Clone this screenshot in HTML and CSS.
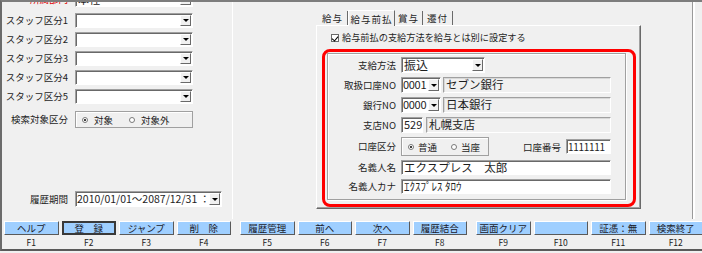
FILE: index.html
```html
<!DOCTYPE html>
<html>
  <head>
    <title>スタッフ登録</title>
    <link rel="stylesheet" href="styles.css">
  </head>
  <body>
    <div class="frame">
      <div class="main">
        <div class="left">
          <div class="row first">
            <span class="lbl red">所属部門</span>
            <div class="combo"><span class="val">本社</span><span class="arrow"></span></div>
          </div>
          <div class="row">
            <span class="lbl">スタッフ区分1</span>
            <div class="combo"><span class="val"></span><span class="arrow"></span></div>
          </div>
          <div class="row">
            <span class="lbl">スタッフ区分2</span>
            <div class="combo"><span class="val"></span><span class="arrow"></span></div>
          </div>
          <div class="row">
            <span class="lbl">スタッフ区分3</span>
            <div class="combo"><span class="val"></span><span class="arrow"></span></div>
          </div>
          <div class="row">
            <span class="lbl">スタッフ区分4</span>
            <div class="combo"><span class="val"></span><span class="arrow"></span></div>
          </div>
          <div class="row">
            <span class="lbl">スタッフ区分5</span>
            <div class="combo"><span class="val"></span><span class="arrow"></span></div>
          </div>
          <div class="row search">
            <span class="lbl">検索対象区分</span>
            <div class="radios">
              <label class="opt first-opt"><i class="radio on"></i>対象</label>
              <label class="opt"><i class="radio"></i>対象外</label>
            </div>
          </div>
          <div class="row period">
            <span class="lbl">履歴期間</span>
            <div class="combo wide"><span class="val period-val">2010/01/01～2087/12/31 ：</span><span class="arrow"></span></div>
          </div>
        </div>

        <div class="right">
          <div class="tabctl">
            <div class="tabs">
              <span class="tab t1">給与</span>
              <span class="tab t2 sel">給与前払</span>
              <span class="tab t3">賞与</span>
              <span class="tab t4">遷付</span>
            </div>
            <div class="tabbody">
              <div class="chk"><i class="box"></i>給与前払の支給方法を給与とは別に設定する</div>
              <div class="mark">
                <div class="grp">
                  <div class="frow">
                    <span class="flbl">支給方法</span>
                    <div class="combo pay"><span class="val big">振込</span><span class="arrow"></span></div>
                  </div>
                  <div class="frow">
                    <span class="flbl">取扱口座NO</span>
                    <div class="pair">
                      <div class="combo code"><span class="val">0001</span><span class="arrow"></span></div>
                      <div class="fld ro name">セブン銀行</div>
                    </div>
                  </div>
                  <div class="frow">
                    <span class="flbl">銀行NO</span>
                    <div class="pair">
                      <div class="combo code"><span class="val">0000</span><span class="arrow"></span></div>
                      <div class="fld ro name">日本銀行</div>
                    </div>
                  </div>
                  <div class="frow">
                    <span class="flbl">支店NO</span>
                    <div class="pair branch">
                      <div class="fld num">529</div>
                      <div class="fld ro bname">札幌支店</div>
                    </div>
                  </div>
                  <div class="frow kind">
                    <span class="flbl">口座区分</span>
                    <div class="pair">
                      <div class="radios acct">
                        <label class="opt first-opt"><i class="radio on"></i>普通</label>
                        <label class="opt"><i class="radio"></i>当座</label>
                      </div>
                      <span class="acct-lbl">口座番号</span>
                      <div class="fld num acct-no">1111111</div>
                    </div>
                  </div>
                  <div class="frow name-row">
                    <span class="flbl">名義人名</span>
                    <div class="fld full">エクスプレス　太郎</div>
                  </div>
                  <div class="frow name-row">
                    <span class="flbl">名義人カナ</span>
                    <div class="fld full kana">ｴｸｽﾌﾟﾚｽ ﾀﾛｳ</div>
                  </div>
                </div>
              </div>
            </div>
          </div>
        </div>
      </div>

      <div class="fbar">
        <div class="fgroup">
          <div class="fkey"><button class="fbtn">ヘルプ</button><span>F1</span></div>
          <div class="fkey"><button class="fbtn def">登　録</button><span>F2</span></div>
          <div class="fkey"><button class="fbtn">ジャンプ</button><span>F3</span></div>
          <div class="fkey"><button class="fbtn">削　除</button><span>F4</span></div>
        </div>
        <div class="fgroup">
          <div class="fkey"><button class="fbtn">履歴管理</button><span>F5</span></div>
          <div class="fkey"><button class="fbtn">前へ</button><span>F6</span></div>
          <div class="fkey"><button class="fbtn">次へ</button><span>F7</span></div>
          <div class="fkey"><button class="fbtn">履歴結合</button><span>F8</span></div>
        </div>
        <div class="fgroup">
          <div class="fkey"><button class="fbtn">画面クリア</button><span>F9</span></div>
          <div class="fkey"><button class="fbtn"></button><span>F10</span></div>
          <div class="fkey"><button class="fbtn">証憑：無</button><span>F11</span></div>
          <div class="fkey"><button class="fbtn">検索終了</button><span>F12</span></div>
        </div>
      </div>
    </div>
  </body>
</html>
```

FILE: styles.css
```css
* {
  box-sizing: border-box;
}
body {
  margin: 0;
  width: 702px;
  height: 253px;
  overflow: hidden;
  background: #f0f0f0;
  font-family: "Noto Sans CJK JP", "Liberation Sans", sans-serif;
  font-size: 9.5px;
  color: #1e1e1e;
}
.frame {
  height: 251px;
  border-top: 2px solid #7d7d7d;
  border-left: 2px solid #6b6b6b;
  border-bottom: 2px solid #5a5a5a;
}
.main {
  display: flex;
  width: 691px;
  height: 217px;
  border-right: 1px solid #9a9a9a;
  box-shadow: 2px 0 0 #fff;
  overflow: hidden;
}

/* left column */
.left {
  width: 230px;
  display: flex;
  flex-direction: column;
  padding-bottom: 12px;
}
.row {
  display: grid;
  grid-template-columns: 66px auto;
  column-gap: 7px;
  align-items: center;
  height: 15px;
  margin-bottom: 4px;
}
.row.first {
  margin-top: -10px;
  margin-bottom: 6px;
}
.row.search {
  margin-top: 3px;
  height: 17px;
}
.row.period {
  margin-top: auto;
  margin-bottom: 0;
  height: 16px;
}
.lbl {
  text-align: right;
  white-space: nowrap;
  line-height: 15px;
}
.red {
  color: #e00000;
}

/* combo / fields */
.combo {
  display: flex;
  width: 118px;
  height: 100%;
  background: #fff;
  border: 1px solid;
  border-color: #a0a0a0 #fff #fff #a0a0a0;
  box-shadow: inset 1px 1px 0 #696969;
}
.combo.wide {
  width: 147px;
}
.val {
  flex: 1;
  overflow: hidden;
  white-space: nowrap;
  padding-left: 2px;
  font-size: 11px;
  line-height: 13px;
}
.val.big {
  font-size: 12px;
}
.val.period-val {
  font-size: 10.5px;
  padding-left: 1px;
}
.arrow {
  width: 11px;
  margin: 1px 1px 1px 0;
  background: #f0f0f0;
  border: 1px solid;
  border-color: #fff #696969 #696969 #fff;
  display: flex;
  align-items: center;
  justify-content: center;
}
.arrow::after {
  content: "";
  border-left: 3px solid transparent;
  border-right: 3px solid transparent;
  border-top: 3px solid #000;
}
.fld {
  height: 100%;
  background: #fff;
  border: 1px solid;
  border-color: #a0a0a0 #fff #fff #a0a0a0;
  box-shadow: inset 1px 1px 0 #696969;
  padding-left: 2px;
  font-size: 11.5px;
  line-height: 13px;
  white-space: nowrap;
  overflow: hidden;
}
.fld.ro {
  background: #f0f0f0;
  box-shadow: inset 1px 1px 0 #d8d8d8;
}
.fld.num {
  font-size: 11px;
}

/* radio groups */
.radios {
  display: flex;
  align-items: center;
  width: 118px;
  height: 100%;
  border: 1px solid #a0a0a0;
  box-shadow: inset 1px 1px 0 #fff;
  padding-left: 6px;
}
.opt {
  display: flex;
  align-items: center;
  white-space: nowrap;
}
.left .opt.first-opt {
  margin-right: 16px;
}
.radio {
  width: 6px;
  height: 6px;
  border-radius: 50%;
  border: 1px solid #7a7a7a;
  background: #fff;
  margin-right: 6px;
  position: relative;
}
.radio.on::after {
  content: "";
  position: absolute;
  left: 1px;
  top: 1px;
  width: 2px;
  height: 2px;
  border-radius: 50%;
  background: #000;
}

/* right side */
.right {
  flex: 1;
  border-left: 1px solid #fff;
}
.tabctl {
  width: 325px;
  margin-left: 83px;
  margin-top: 7px;
}
.tabs {
  display: flex;
  align-items: flex-end;
  height: 16px;
  padding-left: 2px;
}
.tab {
  height: 14px;
  line-height: 14px;
  text-align: center;
  letter-spacing: 1px;
  border-right: 1px solid #6a6a6a;
  white-space: nowrap;
}
.tab.t1 { width: 30px; }
.tab.t2 { width: 47px; }
.tab.t3 { width: 28px; }
.tab.t4 { width: 30px; }
.tab.sel {
  height: 16px;
  line-height: 16px;
  border-left: 1px solid #fff;
  border-top: 1px solid #fff;
  background: #f0f0f0;
  margin-bottom: -1px;
  position: relative;
}
.tabbody {
  height: 184px;
  border: 1px solid;
  border-color: #fff #696969 #696969 #fff;
  box-shadow: inset -1px -1px 0 #a0a0a0;
  padding: 7px 0 0 14px;
}
.chk {
  display: flex;
  align-items: center;
  height: 9px;
  font-size: 9.2px;
  line-height: 9px;
  white-space: nowrap;
}
.box {
  width: 8px;
  height: 8px;
  border: 1px solid #6a6a6a;
  background: #fff;
  margin-right: 3px;
  position: relative;
}
.box::after {
  content: "";
  position: absolute;
  left: 1px;
  top: 0;
  width: 3px;
  height: 5px;
  border-right: 1.5px solid #000;
  border-bottom: 1.5px solid #000;
  transform: rotate(40deg);
}
.mark {
  width: 314px;
  height: 158px;
  margin: 7px 0 0 -9px;
  border: 3px solid #ff0000;
  border-radius: 8px;
  padding: 1px 0 0 2px;
}
.grp {
  width: 299px;
  height: 147px;
  border: 1px solid #a0a0a0;
  box-shadow: inset 1px 1px 0 #fff, 1px 1px 0 #fff;
  padding-top: 3px;
}
.frow {
  display: grid;
  grid-template-columns: 68px auto;
  column-gap: 5px;
  align-items: center;
  height: 16px;
  margin-bottom: 4px;
}
.frow.kind {
  height: 19px;
}
.frow.name-row {
  height: 15px;
}
.flbl {
  text-align: right;
  white-space: nowrap;
  line-height: 15px;
}
.pair {
  display: flex;
  align-items: center;
  height: 100%;
  width: 210px;
}
.combo.pay {
  width: 84px;
}
.combo.code {
  width: 40px;
}
.combo.code .val {
  padding-left: 1px;
  letter-spacing: -0.3px;
}
.fld.name {
  width: 168px;
  margin-left: 2px;
}
.fld.num {
  width: 22px;
}
.fld.bname {
  width: 185px;
  margin-left: 3px;
}
.radios.acct {
  width: 88px;
}
.acct .opt.first-opt {
  margin-right: 14px;
}
.acct .radio {
  margin-right: 4px;
}
.acct-lbl {
  margin-left: auto;
  margin-right: 5px;
  white-space: nowrap;
}
.fld.acct-no {
  width: 45px;
  height: 15px;
  font-size: 10px;
  letter-spacing: -0.3px;
  padding-left: 1px;
}
.fld.full {
  width: 210px;
}
.fld.kana {
  font-size: 11px;
}

/* function key bar */
.fbar {
  display: flex;
  padding: 2px 0 0 2px;
  height: 30px;
  overflow: hidden;
}
.fgroup {
  display: flex;
  gap: 3px;
  margin-right: 9px;
}
.fkey {
  width: 54.5px;
  display: flex;
  flex-direction: column;
  align-items: center;
  flex-shrink: 0;
}
.fbtn {
  width: 100%;
  height: 14px;
  padding: 0;
  margin: 0;
  font-family: inherit;
  font-size: 9.5px;
  line-height: 12px;
  color: #1a1a2a;
  background: #9fcfff;
  border: 1px solid;
  border-color: #fff #5a5a5a #5a5a5a #fff;
  white-space: nowrap;
}
.fbtn.def {
  border: 2px solid #3a3a3a;
  line-height: 10px;
}
.fkey span {
  margin-top: 3px;
  font-size: 8.5px;
  line-height: 9px;
  color: #222;
}
```
